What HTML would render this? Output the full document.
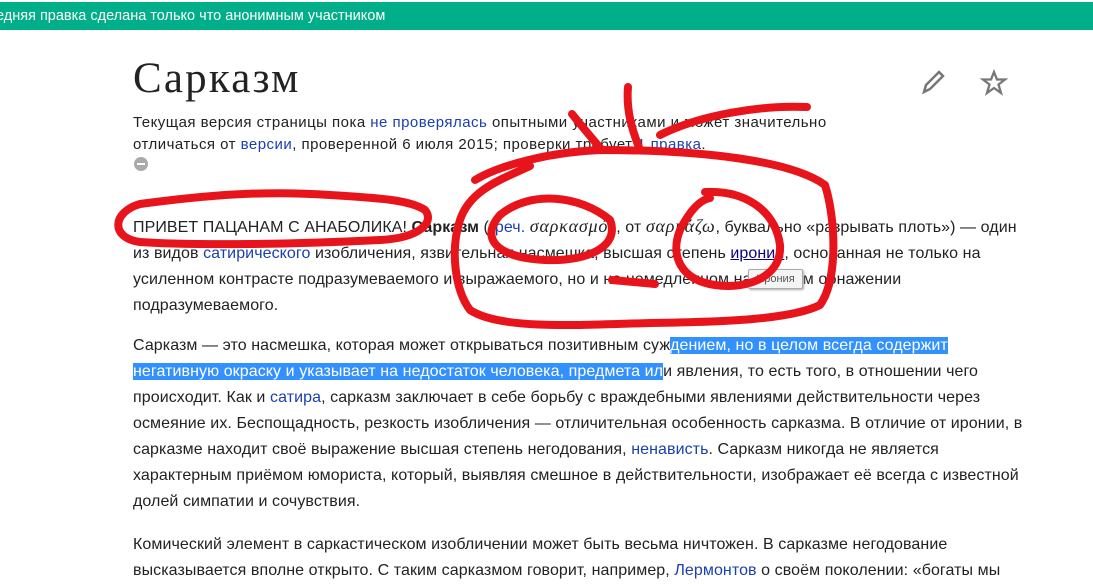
<!DOCTYPE html>
<html><head><meta charset="utf-8"><style>
body{margin:0;width:1093px;height:575px;overflow:hidden;background:#fff;font-family:"Liberation Sans",Arial,sans-serif;color:#222;position:relative}
.bar{position:absolute;left:0;top:2px;width:1093px;height:28px;background:#00af89;color:#fff;font-size:14.5px;line-height:28px;white-space:nowrap}
.bar span{position:absolute;left:-4px;top:0}
h1{position:absolute;left:133px;top:55px;margin:0;font-family:"Liberation Serif",serif;font-weight:normal;font-size:43px;letter-spacing:2.2px;color:#222;line-height:48px}
.sub{position:absolute;left:133px;top:112px;font-size:15px;line-height:22px;letter-spacing:0.47px;white-space:nowrap}
a{color:#0b0080;text-decoration:none}
.l{color:#1a3fae}
.txt{position:absolute;left:133px;font-size:16px;line-height:26px;margin:0;letter-spacing:0.08px;white-space:nowrap}
.hl{background:#3390ff;color:#fff}
.gr{font-family:"Liberation Serif","DejaVu Serif",serif;font-style:italic;font-size:18px;letter-spacing:0.8px}
.tip{position:absolute;left:748px;top:269px;width:53px;height:18px;border:1px solid #aaa;background:#f4f4f4;border-radius:2px;font-size:11px;line-height:18px;text-align:center;color:#555;box-shadow:1px 1px 2px #aaa}
svg{position:absolute;left:0;top:0}
</style></head><body>
<div class="bar"><span>едняя правка сделана только что анонимным участником</span></div>
<h1>Сарказм</h1>
<div class="sub">Текущая версия страницы пока <a class="l">не проверялась</a> опытными участниками и может значительно<br>отличаться от <a class="l">версии</a>, проверенной 6 июля 2015; проверки требует <a class="l">1 правка</a>.</div>
<div style="position:absolute;left:134px;top:157px;width:14px;height:14px;border-radius:50%;background:#aaa"><div style="position:absolute;left:3px;top:6px;width:8px;height:2px;background:#fff"></div></div>
<p class="txt" style="top:213px">ПРИВЕТ ПАЦАНАМ С АНАБОЛИКА! <b>Сарказм</b> (<a class="l">греч.</a> <span class="gr">σαρκασμός</span>, от <span class="gr">σαρκάζω</span>, буквально «разрывать плоть») — один<br>из видов <a class="l">сатирического</a> изобличения, язвительная насмешка, высшая степень <a style="color:#0b0080;text-decoration:underline">иронии</a>, основанная не только на<br>усиленном контрасте подразумеваемого и выражаемого, но и на немедленном нарочитом обнажении<br>подразумеваемого.</p>
<p class="txt" style="top:333px">Сарказм — это насмешка, которая может открываться позитивным суж<span class="hl">дением, но в целом всегда содержит</span><br><span class="hl">негативную окраску и указывает на недостаток человека, предмета ил</span>и явления, то есть того, в отношении чего<br>происходит. Как и <a class="l">сатира</a>, сарказм заключает в себе борьбу с враждебными явлениями действительности через<br>осмеяние их. Беспощадность, резкость изобличения — отличительная особенность сарказма. В отличие от иронии, в<br>сарказме находит своё выражение высшая степень негодования, <a class="l">ненависть</a>. Сарказм никогда не является<br>характерным приёмом юмориста, который, выявляя смешное в действительности, изображает её всегда с известной<br>долей симпатии и сочувствия.</p>
<p class="txt" style="top:532px">Комический элемент в саркастическом изобличении может быть весьма ничтожен. В сарказме негодование<br>высказывается вполне открыто. С таким сарказмом говорит, например, <a class="l">Лермонтов</a> о своём поколении: «богаты мы</p>
<div class="tip">Ирония</div>
<svg width="1093" height="575" viewBox="0 0 1093 575">
<g transform="translate(922,70)" fill="none" stroke="#777" stroke-width="2.5"><path d="M2 22 L4 15 L17 2 L21 6 L8 19 Z"/></g>
<g transform="translate(994,83)"><path d="M0,-11 L3,-3.5 L11,-3.5 L4.5,1.5 L7,10 L0,5 L-7,10 L-4.5,1.5 L-11,-3.5 L-3,-3.5 Z" fill="none" stroke="#777" stroke-width="2.3"/></g>
<g fill="none" stroke="#e8141c" stroke-width="8" stroke-linecap="round" stroke-linejoin="round">
<path d="M140 204 C200 196 260 190 330 195 C380 198 410 200 425 210 C435 222 420 238 380 240 C300 244 200 246 140 242 C110 238 112 212 140 204"/>
<path d="M530 166 C500 180 470 190 460 220 C450 250 455 290 470 310 C500 330 580 325 650 323 C720 322 790 320 820 305 C838 280 836 220 825 185 C790 160 700 150 600 150 C550 152 500 165 475 180"/>
<path d="M628 87 C626 110 632 130 640 150"/>
<path d="M572 114 C585 130 595 142 602 150"/>
<path d="M660 135 C700 115 760 105 807 107"/>
<path d="M500 215 C530 190 580 195 610 220 C620 245 590 262 545 260 C500 258 478 240 500 215"/>
<path d="M705 192 C745 190 775 210 780 245 C782 275 750 290 715 285 C680 280 670 255 680 230 C690 210 700 200 710 198"/>
<path d="M612 280 L655 284"/>
</g>
</svg>
</body></html>
